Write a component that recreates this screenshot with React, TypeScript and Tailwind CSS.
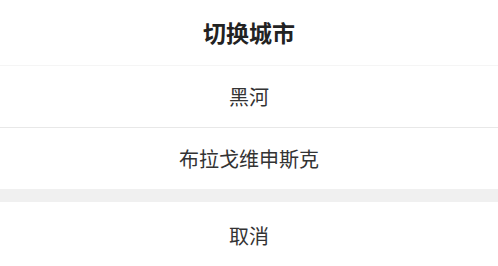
import React from "react";

const CITIES = ["黑河", "布拉戈维申斯克"];

export default function App() {
  return (
    <div
      className="w-[498px] h-[266px] bg-white flex flex-col text-[#333]"
      style={{ fontFamily: '"Noto Sans CJK SC", "Noto Sans", sans-serif' }}
    >
      {/* Title */}
      <div className="h-[66px] flex items-center justify-center border-b border-[#f5f5f5] text-[23px] font-bold text-[#222]">
        切换城市
      </div>

      {/* City list */}
      {CITIES.map((city, i) => (
        <div
          key={city}
          className={
            "flex items-center justify-center text-[20px] " +
            (i < CITIES.length - 1 ? "h-[62px] border-b border-[#e8e8e8]" : "h-[61px]")
          }
        >
          {city}
        </div>
      ))}

      {/* Spacer */}
      <div className="h-[13px] bg-[#f0f0f0]" />

      {/* Cancel */}
      <div className="flex-1 flex items-center justify-center pt-1 text-[20px]">
        取消
      </div>
    </div>
  );
}
